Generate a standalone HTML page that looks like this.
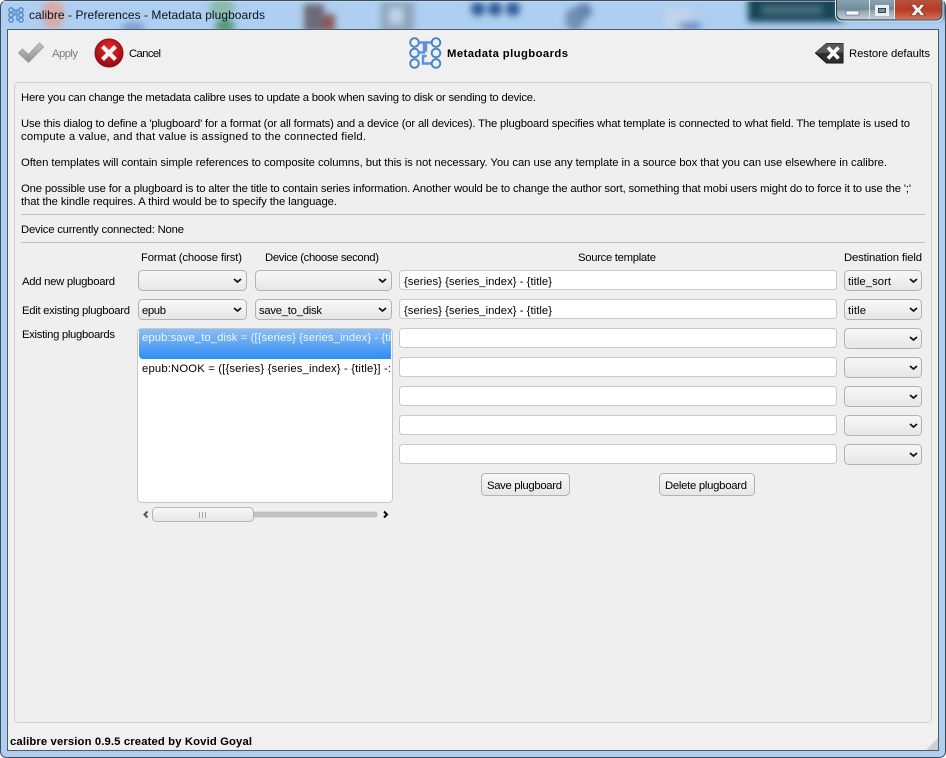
<!DOCTYPE html>
<html><head><meta charset="utf-8"><style>
html,body{margin:0;padding:0;width:946px;height:758px;overflow:hidden;background:#fff}
svg{display:block;position:absolute;left:0;top:0}
text{font-family:"Liberation Sans",sans-serif;font-size:11.3px;fill:#000;white-space:pre}
.b{font-weight:bold}
</style></head><body>
<svg width="946" height="758" viewBox="0 0 946 758" xmlns="http://www.w3.org/2000/svg">
<defs>
<filter id="bl" x="-50%" y="-50%" width="200%" height="200%"><feGaussianBlur stdDeviation="3.500"/></filter>
<clipPath id="tb"><rect x="1" y="1" width="944" height="28"/></clipPath>
<linearGradient id="sel" x1="0" y1="0" x2="0" y2="1"><stop offset="0" stop-color="#8cbdf3"/><stop offset=".5" stop-color="#5ea6f4"/><stop offset="1" stop-color="#2f8cf4"/></linearGradient>
<linearGradient id="cb" x1="0" y1="0" x2="0" y2="1"><stop offset="0" stop-color="#f8f8f8"/><stop offset="1" stop-color="#e6e6e6"/></linearGradient>
<linearGradient id="red" x1="0" y1="0" x2="0" y2="1"><stop offset="0" stop-color="#b5533f"/><stop offset=".5" stop-color="#bb3a20"/><stop offset="1" stop-color="#d46a52"/></linearGradient>
<radialGradient id="can" cx=".5" cy=".35" r=".7"><stop offset="0" stop-color="#e8262c"/><stop offset="1" stop-color="#8e0a10"/></radialGradient>
<linearGradient id="btn" x1="0" y1="0" x2="0" y2="1"><stop offset="0" stop-color="#8aa3b0"/><stop offset=".5" stop-color="#6f8b9a"/><stop offset=".55" stop-color="#8ea3ae"/><stop offset="1" stop-color="#c2ced5"/></linearGradient>
<linearGradient id="chk" x1="0" y1="0" x2="0" y2="1"><stop offset="0" stop-color="#c4c4c4"/><stop offset="1" stop-color="#8e8e8e"/></linearGradient>
</defs>

<!-- window frame -->
<rect x="0" y="0" width="946" height="758" fill="#fff"/>
<rect x=".5" y=".5" width="945" height="757" rx="6" fill="#aecff1" stroke="#3d4d5c"/>
<g clip-path="url(#tb)">
<g filter="url(#bl)">
<ellipse cx="53" cy="14" rx="11" ry="15" fill="#d9aaa6"/>
<ellipse cx="133" cy="28" rx="12" ry="6" fill="#7f9fd2"/>
<ellipse cx="222" cy="8" rx="13" ry="11" fill="#8cbcae"/>
<ellipse cx="225" cy="26" rx="10" ry="7" fill="#4f9a78"/>
<rect x="304" y="4" width="20" height="28" fill="#6c6a78"/>
<rect x="322" y="14" width="13" height="18" fill="#8a5a58"/>
<rect x="381" y="2" width="33" height="30" fill="#8ea2ba"/>
<rect x="389" y="8" width="14" height="16" fill="#c0d4e8"/>
<circle cx="478" cy="9" r="7" fill="#2f5894"/><circle cx="495" cy="9" r="7" fill="#2f5894"/><circle cx="513" cy="9" r="7" fill="#2f5894"/>
<ellipse cx="575" cy="19" rx="10" ry="12" fill="#7290b6"/>
<circle cx="584" cy="11" r="8" fill="#6485ae"/>
<rect x="665" y="8" width="26" height="22" fill="#c0d4ea"/>
<ellipse cx="690" cy="26" rx="12" ry="4" fill="#6a8cc0"/>
<rect x="748" y="-4" width="95" height="26" fill="#164558"/>
<rect x="762" y="6" width="60" height="8" fill="#47707f"/>
<rect x="838" y="-4" width="110" height="22" fill="#4e7286"/>
</g>
</g>
<rect x="1" y="1" width="944" height="1" fill="#dce8f4" opacity=".5"/>

<!-- window buttons -->
<path d="M835.500 0V15a6 6 0 0 0 6 6H937a6 6 0 0 0 6-6V0" fill="none" stroke="#dfe8ee" stroke-width="1"/>
<path d="M837 0V14a5 5 0 0 0 5 5h27V0z" fill="url(#btn)"/>
<path d="M870 0h24v19h-24z" fill="url(#btn)"/>
<path d="M895 0h46v14a5 5 0 0 1-5 5h-41z" fill="url(#red)"/>
<path d="M869.500 0v19M894.500 0v19" stroke="#dfe6ea" stroke-width="1"/>
<path d="M836.500 0v14a6 6 0 0 0 6 6H936a6 6 0 0 0 6-6V0" fill="none" stroke="#33444f" stroke-width="1"/>
<rect x="846" y="11" width="13" height="4" fill="#f6f8fa" stroke="#455560" stroke-width=".5"/>
<rect x="875.500" y="5.500" width="13" height="10" fill="#e8eef2" stroke="#e8eef2" stroke-width="1"/>
<rect x="878.500" y="8.500" width="7" height="4" fill="#7c8f9c" stroke="#34444e" stroke-width="1"/>
<path d="M911 4.500h4.500l2 3h1l2-3H925l-4.500 5.500 4.500 5.500h-4.500l-2-3h-1l-2 3H910.500l4.500-5.500z" fill="#f4f0ee" stroke="#5a332a" stroke-width=".6"/>

<!-- title icon -->
<g fill="none" stroke="#4d86c8" stroke-width="1.300">
<circle cx="11" cy="10" r="2.200"/><circle cx="11" cy="15" r="2.200"/><circle cx="11" cy="20" r="2.200"/>
<circle cx="21" cy="10" r="2.200"/><circle cx="21" cy="15" r="2.200"/><circle cx="21" cy="20" r="2.200"/>
<path d="M13 10h2v5h-2M19 10h-2v10h2"/>
</g>
<text x="29" y="19" textLength="236" style="font-size:12px;fill:#0a1420">calibre - Preferences - Metadata plugboards</text>

<!-- client area -->
<rect x="7.500" y="29.500" width="931" height="721" fill="#f0f0f0" stroke="#4f5b66"/>

<!-- toolbar -->
<path d="M18.500 53l4-4 6 5.500 11-11.500 4 4-15 15.500z" fill="url(#chk)" stroke="#a4a4a4" stroke-width="1" stroke-linejoin="round"/>
<text x="52" y="57" textLength="26" style="fill:#7e7e7e">Apply</text>
<circle cx="109" cy="53" r="14" fill="url(#can)" stroke="#8e1015" stroke-width="1"/>
<path d="M102.500 46.500l13 13M115.500 46.500l-13 13" stroke="#f8f2f2" stroke-width="4.200" fill="none"/>
<text x="129" y="57" textLength="32">Cancel</text>

<g fill="none" stroke="#3f83cb" stroke-width="1.900">
<circle cx="414.500" cy="42.500" r="4.300"/><circle cx="414.500" cy="53" r="4.300"/><circle cx="414.500" cy="63.500" r="4.300"/>
<circle cx="436" cy="42.500" r="4.300"/><circle cx="436" cy="53" r="4.300"/><circle cx="436" cy="63.500" r="4.300"/>
</g>
<g fill="none" stroke="#5c8fe0" stroke-width="2.400">
<path d="M419 42.500h5v10h-5M431 42.500h-5v8h-3M431 63.500H423V56h3.500"/>
</g>
<text x="447" y="57" class="b" textLength="121">Metadata plugboards</text>

<path d="M815.500 53l11-9.500h16.500v19.500h-16.500z" fill="#2e2e2e" stroke="#111" stroke-width="1"/>
<path d="M815.500 53l11-9.500h16.500v9z" fill="#585858"/>
<path d="M828 47.500l10.500 11M838.500 47.500l-10.500 11" stroke="#fff" stroke-width="3.600" fill="none"/>
<text x="849" y="57" textLength="81">Restore defaults</text>

<!-- group box -->
<rect x="14.500" y="82.500" width="917" height="640" rx="4" fill="#efefef" stroke="#cfcfcf"/>

<text x="21" y="101" textLength="515">Here you can change the metadata calibre uses to update a book when saving to disk or sending to device.</text>
<text x="21" y="127" textLength="889">Use this dialog to define a 'plugboard' for a format (or all formats) and a device (or all devices). The plugboard specifies what template is connected to what field. The template is used to</text>
<text x="21" y="140" textLength="345">compute a value, and that value is assigned to the connected field.</text>
<text x="21" y="166" textLength="866">Often templates will contain simple references to composite columns, but this is not necessary. You can use any template in a source box that you can use elsewhere in calibre.</text>
<text x="21" y="192" textLength="890">One possible use for a plugboard is to alter the title to contain series information. Another would be to change the author sort, something that mobi users might do to force it to use the ';'</text>
<text x="21" y="205" textLength="316">that the kindle requires. A third would be to specify the language.</text>
<rect x="21" y="214" width="904" height="1" fill="#bdbdbd"/>
<text x="21" y="233" textLength="163">Device currently connected: None</text>
<rect x="21" y="242" width="904" height="1" fill="#bdbdbd"/>

<text x="141" y="261" textLength="101">Format (choose first)</text>
<text x="265" y="261" textLength="114">Device (choose second)</text>
<text x="578" y="261" textLength="78">Source template</text>
<text x="844" y="261" textLength="78">Destination field</text>
<text x="22" y="285" textLength="93">Add new plugboard</text>
<text x="22" y="314" textLength="108">Edit existing plugboard</text>
<text x="22" y="338" textLength="93">Existing plugboards</text>

<!-- line edits -->
<g fill="#fff" stroke="#c9c9c9">
<rect x="399.500" y="270.500" width="437" height="19" rx="3"/>
<rect x="399.500" y="299.500" width="437" height="19" rx="3"/>
<rect x="399.500" y="328.500" width="437" height="19" rx="3"/>
<rect x="399.500" y="357.500" width="437" height="19" rx="3"/>
<rect x="399.500" y="386.500" width="437" height="19" rx="3"/>
<rect x="399.500" y="415.500" width="437" height="19" rx="3"/>
<rect x="399.500" y="444.500" width="437" height="19" rx="3"/>
</g>
<text x="404" y="285" textLength="148">{series} {series_index} - {title}</text>
<text x="404" y="314" textLength="148">{series} {series_index} - {title}</text>

<!-- combos -->
<g fill="url(#cb)" stroke="#b2b2b2">
<rect x="138.500" y="270.500" width="108" height="20" rx="4"/>
<rect x="255.500" y="270.500" width="136" height="20" rx="4"/>
<rect x="138.500" y="299.500" width="108" height="20" rx="4"/>
<rect x="255.500" y="299.500" width="136" height="20" rx="4"/>
<rect x="844.500" y="270.500" width="77" height="20" rx="4"/>
<rect x="844.500" y="299.500" width="77" height="20" rx="4"/>
<rect x="844.500" y="328.500" width="77" height="20" rx="4"/>
<rect x="844.500" y="357.500" width="77" height="20" rx="4"/>
<rect x="844.500" y="386.500" width="77" height="20" rx="4"/>
<rect x="844.500" y="415.500" width="77" height="20" rx="4"/>
<rect x="844.500" y="444.500" width="77" height="20" rx="4"/>
</g>
<g fill="none" stroke="#111" stroke-width="1.800">
<path d="M234 279l3.500 3 3.500-3M379 279l3.500 3 3.500-3M234 308l3.500 3 3.500-3M379 308l3.500 3 3.500-3"/>
<path d="M910 279l3.500 3 3.500-3M910 308l3.500 3 3.500-3M910 337l3.500 3 3.500-3M910 366l3.500 3 3.500-3M910 395l3.500 3 3.500-3M910 424l3.500 3 3.500-3M910 453l3.500 3 3.500-3"/>
</g>
<text x="142" y="314" textLength="24">epub</text>
<text x="259" y="314" textLength="63">save_to_disk</text>
<text x="848" y="285" textLength="43">title_sort</text>
<text x="848" y="314" textLength="18">title</text>

<!-- list -->
<rect x="137.500" y="328.500" width="255" height="174" rx="4" fill="#fff" stroke="#c6c6c6"/>
<path d="M139 329h252v30H143a4 4 0 0 1-4-4z" fill="url(#sel)"/>
<text x="142" y="341" textLength="249" style="fill:#eef5fd">epub:save_to_disk = ([{series} {series_index} - {ti</text>
<text x="142" y="372" textLength="249">epub:NOOK = ([{series} {series_index} - {title}] -:</text>

<!-- scrollbar -->
<rect x="253" y="512" width="124" height="5" rx="2" fill="#c2c2c2" stroke="#b0b0b0" stroke-width=".6"/>
<rect x="152.500" y="507.500" width="101" height="14" rx="4" fill="url(#cb)" stroke="#b5b5b5"/>
<path d="M199.500 512v6M202.500 512v6M205.500 512v6" stroke="#a6a6a6"/>
<path d="M147.500 511.500l-3 3 3 3" fill="none" stroke="#555" stroke-width="2"/>
<path d="M384 511.500l3 3-3 3" fill="none" stroke="#000" stroke-width="2"/>

<!-- buttons -->
<rect x="481.500" y="473.500" width="88" height="22" rx="4" fill="url(#cb)" stroke="#b2b2b2"/>
<rect x="659.500" y="473.500" width="95" height="22" rx="4" fill="url(#cb)" stroke="#b2b2b2"/>
<text x="487" y="489" textLength="75">Save plugboard</text>
<text x="665" y="489" textLength="82">Delete plugboard</text>

<!-- status bar -->
<text x="10" y="745" class="b" textLength="242">calibre version 0.9.5 created by Kovid Goyal</text>
<path d="M938 738v12h-12z" fill="#d0d0d0"/>
</svg>
</body></html>
